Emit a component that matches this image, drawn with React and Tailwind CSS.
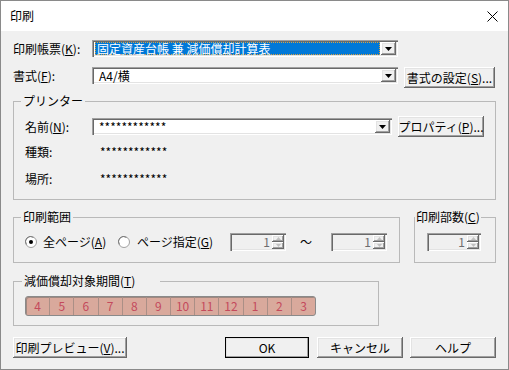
import React from 'react';

const font = "font-['Noto_Sans_CJK_JP','Noto_Sans',sans-serif]";

const raised =
  'bg-[#f0f0f0] shadow-[inset_-1px_-1px_0_#696969,inset_1px_1px_0_#ffffff,inset_-2px_-2px_0_#a0a0a0,inset_2px_2px_0_#e3e3e3]';
const sunken =
  'shadow-[inset_1px_1px_0_#a0a0a0,inset_2px_2px_0_#696969,inset_-1px_-1px_0_#ffffff,inset_-2px_-2px_0_#e3e3e3]';

// Classic 3D push button
const Btn = ({ children, className = '', def }) => (
  <div
    className={`flex items-center justify-center h-[21px] ${raised} ${def ? 'outline outline-1 outline-black -outline-offset-1' : ''} ${className}`}
  >
    {children}
  </div>
);

const DropArrow = () => (
  <div className={`w-[15px] h-full flex items-center justify-center ${raised}`}>
    <svg width="7" height="4" viewBox="0 0 7 4">
      <path d="M0 0h7L3.5 4z" fill="#000" />
    </svg>
  </div>
);

const Combo = ({ w, children, selected }) => (
  <div className={`flex h-[17px] bg-white p-[2px] ${sunken} ${w}`}>
    <div className="flex-1 flex items-center min-w-0">
      {selected ? (
        <div className="flex-1 h-full mx-[1px] flex items-center bg-[#0078d7] text-white border border-dotted border-[#d8a040] pl-[1px] whitespace-nowrap leading-[11px]">
          {children}
        </div>
      ) : (
        <span className="pl-[5px] whitespace-nowrap">{children}</span>
      )}
    </div>
    <DropArrow />
  </div>
);

const SpinArrow = ({ up }) => (
  <div className={`flex-1 flex items-center justify-center ${raised}`}>
    <svg width="5" height="3" viewBox="0 0 5 3">
      <path d={up ? 'M0 3h5L2.5 0z' : 'M0 0h5L2.5 3z'} fill="#c0c0c0" />
    </svg>
  </div>
);

const Spin = ({ w }) => (
  <div className={`flex h-[18px] bg-[#f0f0f0] p-[2px] ${sunken} ${w}`}>
    <div className="flex-1 flex items-center justify-end pr-[2px] text-[#6d6d6d]">1</div>
    <div className="w-[12px] flex flex-col">
      <SpinArrow up />
      <SpinArrow />
    </div>
  </div>
);

const Radio = ({ on }) => (
  <svg width="12" height="12" viewBox="0 0 12 12" className="shrink-0">
    <circle cx="6" cy="6" r="5.5" fill="#ffffff" stroke="#a0a0a0" />
    <path d="M1.5 8.5A5 5 0 0 1 8.5 1.5" fill="none" stroke="#7a7a7a" />
    {on && <circle cx="6" cy="6" r="2" fill="#000" />}
  </svg>
);

const months = [4, 5, 6, 7, 8, 9, 10, 11, 12, 1, 2, 3];

export default function App() {
  return (
    <div
      className={`w-[509px] h-[370px] border border-[#8a8a8a] bg-[#f0f0f0] text-[12px] leading-[14px] text-black flex flex-col ${font}`}
    >
      {/* Title bar */}
      <div className="h-[30px] bg-white flex items-center justify-between pl-[9px] pr-[10px] shrink-0">
        <span>印刷</span>
        <svg width="11" height="11" viewBox="0 0 11 11">
          <path d="M0.5 0.5l10 10M10.5 0.5l-10 10" stroke="#000" strokeWidth="1" />
        </svg>
      </div>

      <div className="flex-1 px-[12px] pt-[9px]">
        {/* 印刷帳票 */}
        <div className="flex items-center h-[17px]">
          <span className="w-[79px]">
            印刷帳票(<u>K</u>):
          </span>
          <Combo w="w-[306px]" selected>
            固定資産台帳 兼 減価償却計算表
          </Combo>
        </div>

        {/* 書式 */}
        <div className="flex items-start mt-[10px]">
          <span className="w-[79px] h-[17px] flex items-center">
            書式(<u>F</u>):
          </span>
          <Combo w="w-[306px]">A4/横</Combo>
          <Btn className="ml-[6px] w-[91px]">
            書式の設定(<u>S</u>)...
          </Btn>
        </div>

        {/* プリンター */}
        <fieldset className="mt-[6px] border border-[#b9b9b9]">
          <legend className="ml-[7px] px-[2px] leading-[14px]">プリンター</legend>
          <div className="pl-[11px] pt-[8px] pb-[12px]">
            <div className="flex items-center h-[21px]">
              <span className="w-[67px]">
                名前(<u>N</u>):
              </span>
              <Combo w="w-[300px]">************</Combo>
              <Btn className="ml-[6px] w-[86px]">
                プロパティ(<u>P</u>)...
              </Btn>
            </div>
            <div className="flex items-center h-[16px] mt-[7px]">
              <span className="w-[75px]">種類:</span>
              <span>************</span>
            </div>
            <div className="flex items-center h-[16px] mt-[11px]">
              <span className="w-[75px]">場所:</span>
              <span>************</span>
            </div>
          </div>
        </fieldset>

        {/* 印刷範囲 / 印刷部数 */}
        <div className="flex mt-[10px] gap-[14px]">
          <fieldset className="w-[387px] border border-[#b9b9b9]">
            <legend className="ml-[7px] px-[2px] leading-[14px]">印刷範囲</legend>
            <div className="flex items-center h-[18px] pl-[11px] mt-[9px] mb-[11px]">
              <div className="w-[93px] flex items-center gap-[6px]">
                <Radio on />
                <span>
                  全ページ(<u>A</u>)
                </span>
              </div>
              <div className="w-[112px] flex items-center gap-[7px]">
                <Radio />
                <span>
                  ページ指定(<u>G</u>)
                </span>
              </div>
              <Spin w="w-[56px]" />
              <span className="w-[45px] pl-[14px]">～</span>
              <Spin w="w-[56px]" />
            </div>
          </fieldset>
          <fieldset className="flex-1 border border-[#b9b9b9]">
            <legend className="px-[1px] leading-[14px]">
              印刷部数(<u>C</u>)
            </legend>
            <div className="flex items-center h-[18px] pl-[12px] mt-[9px] mb-[11px]">
              <Spin w="w-[54px]" />
            </div>
          </fieldset>
        </div>

        {/* 減価償却対象期間 */}
        <fieldset className="w-[366px] mt-[11px] border border-[#b9b9b9]">
          <legend className="ml-[8px] w-[138px] px-[2px] leading-[14px] whitespace-nowrap">
            減価償却対象期間(<u>T</u>)
          </legend>
          <div className="pl-[11px] pt-[8px] pb-[9px]">
            <div className="flex w-[291px] h-[20px] rounded-[3px] border border-[#8a8a8a] overflow-hidden bg-[#d9a99c] shadow-[inset_1px_1px_0_#a08880]">
              {months.map((m, i) => (
                <div
                  key={m}
                  className={`flex-1 flex items-center justify-center text-[#c44a5c] ${i ? 'border-l border-[#ab8f86]' : ''}`}
                >
                  {m}
                </div>
              ))}
            </div>
          </div>
        </fieldset>

        {/* Buttons */}
        <div className="flex mt-[11px]">
          <Btn className="w-[114px]">
            印刷プレビュー(<u>V</u>)...
          </Btn>
          <Btn def className="ml-auto w-[84px]">
            OK
          </Btn>
          <Btn className="ml-[8px] w-[86px]">キャンセル</Btn>
          <Btn className="ml-[7px] w-[86px]">ヘルプ</Btn>
        </div>
      </div>
    </div>
  );
}
